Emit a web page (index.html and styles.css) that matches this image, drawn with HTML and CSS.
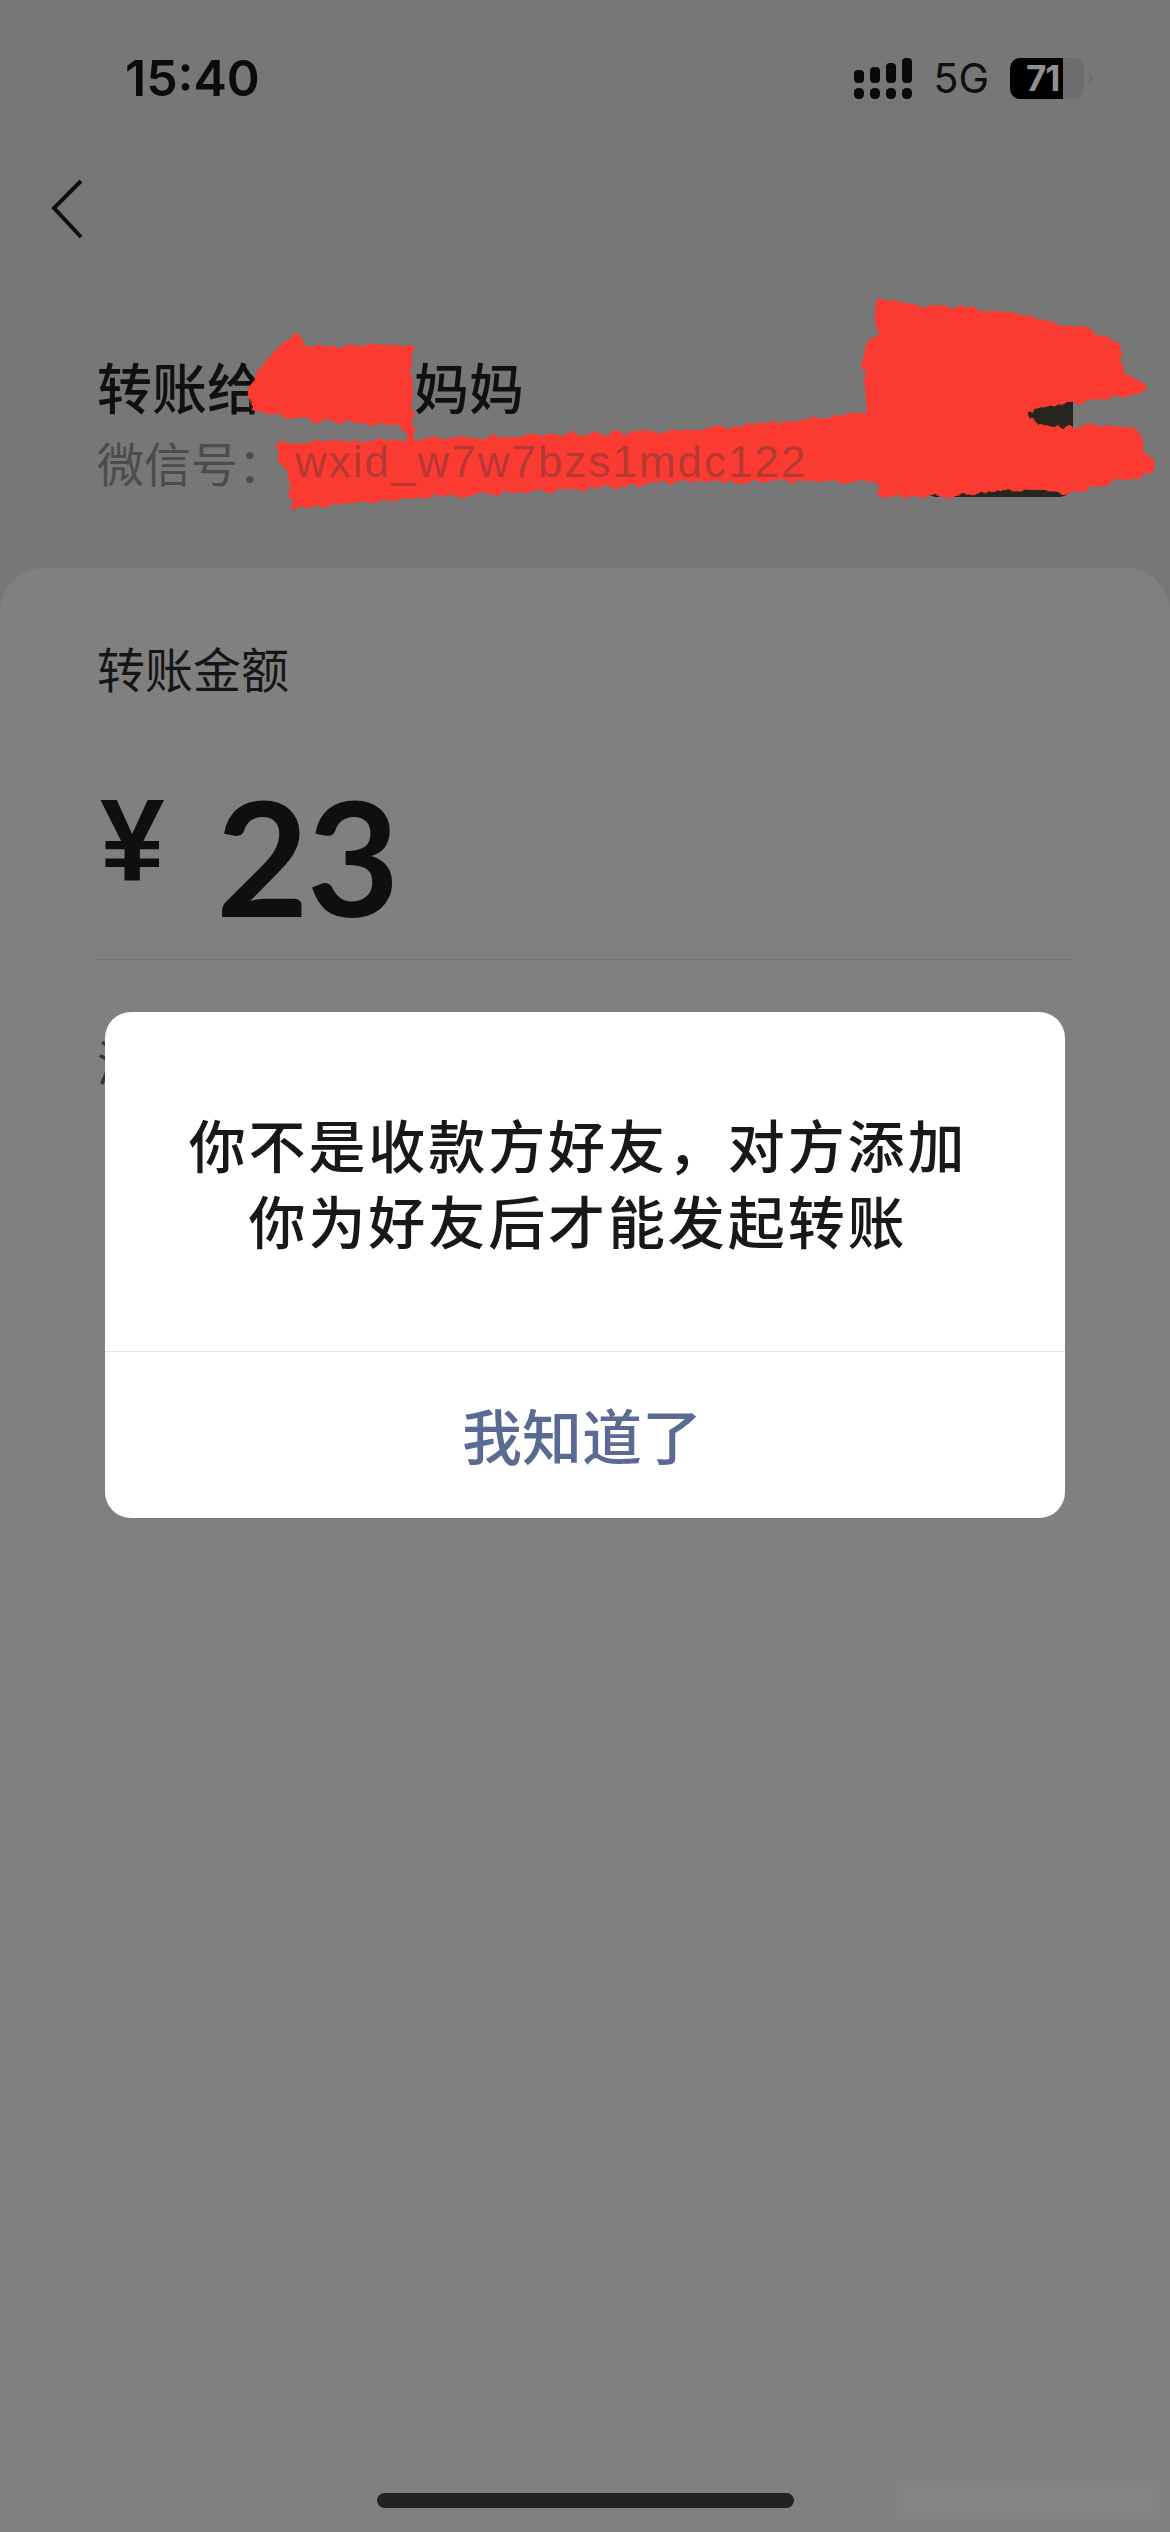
FILE: index.html
```html
<!DOCTYPE html>
<html lang="zh-CN">
<head>
<meta charset="utf-8">
<title>转账</title>
<link rel="stylesheet" href="styles.css">
</head>
<body>
<div class="screen">
  <header class="status">
    <span class="time">15:40</span>
    <div class="status-right">
      <svg class="signal" width="58" height="41" viewBox="0 0 58 41">
        <g fill="#0a0a0a">
          <rect x="0" y="12" width="10" height="13" rx="4"/>
          <rect x="16" y="9" width="10" height="16" rx="4"/>
          <rect x="32" y="5" width="10" height="20" rx="4"/>
          <rect x="48" y="0" width="10" height="25" rx="4"/>
          <rect x="0" y="30" width="10" height="11" rx="4.5"/>
          <rect x="16" y="30" width="10" height="11" rx="4.5"/>
          <rect x="32" y="30" width="10" height="11" rx="4.5"/>
          <rect x="48" y="30" width="10" height="11" rx="4.5"/>
        </g>
      </svg>
      <span class="net">5G</span>
      <div class="battery">
        <div class="battery-body">
          <div class="battery-fill"><span class="battery-num">71</span></div>
        </div>
        <div class="battery-tip"></div>
      </div>
    </div>
  </header>

  <nav class="nav">
    <svg width="34" height="60" viewBox="0 0 34 60"><path d="M31 2 L4 29 L31 58" fill="none" stroke="#0f0f0f" stroke-width="4"/></svg>
  </nav>

  <section class="payee">
    <div class="payee-name">转账给<span class="hidden-name"></span>妈妈</div>
    <div class="payee-id"><span class="id-label">微信号：</span><span class="id-value">wxid_w7w7bzs1mdc122</span></div>
    <div class="avatar"></div>
  </section>

  <main class="sheet">
    <div class="amount-label">转账金额</div>
    <div class="amount"><span class="yen">¥</span><span class="amount-num">23</span></div>
    <div class="rule"></div>
    <div class="remark">添加转账说明</div>
  </main>

  <svg class="scribble" width="1170" height="560" viewBox="0 0 1170 560">
    <defs>
      <filter id="rough" filterUnits="userSpaceOnUse" x="0" y="0" width="1170" height="560">
        <feTurbulence type="fractalNoise" baseFrequency="0.09" numOctaves="2" seed="4" result="n"/>
        <feDisplacementMap in="SourceGraphic" in2="n" scale="11" xChannelSelector="R" yChannelSelector="G"/>
      </filter>
    </defs>
    <g fill="#fb3b30" filter="url(#rough)">
      <path d="M298 332 L305 345 L412 345 L412 440 L400 425 L300 420 L252 410 L250 385 L262 365 L275 350 Z"/>
      <path d="M276 443 L700 430 L872 412 L880 482 L700 482 L420 498 L292 508 L290 482 L282 468 Z"/>
      <path d="M877 300 L1000 312 L1091 330 L1120 343 L1125 375 L1148 383 L1145 393 L1074 403 L1030 412 L1035 424 L1134 427 L1155 467 L1140 478 L1070 492 L1000 490 L935 497 L880 496 L867 413 L863 357 L866 345 L880 333 L875 325 Z"/>
    </g>
  </svg>

  <div class="scrim-dialog" role="dialog">
    <div class="dialog-body">你不是收款方好友，对方添加<br>你为好友后才能发起转账</div>
    <div class="dialog-action">我知道了</div>
  </div>

  <div class="smudge"></div>
  <div class="home-bar"></div>
</div>
</body>
</html>
```

FILE: styles.css
```css
* { box-sizing: border-box; margin: 0; padding: 0; }
html, body { width: 1170px; height: 2532px; overflow: hidden; }
body { font-family: "Noto Sans CJK SC", sans-serif; background: #777; }

.screen { position: relative; width: 1170px; height: 2532px; background: #777777; display: flex; flex-direction: column; overflow: hidden; }

.status { height: 152px; padding: 50px 77px 0 125px; display: flex; justify-content: space-between; align-items: flex-start; }
.time { font-family: Inter, sans-serif; font-size: 50px; font-weight: 600; line-height: 56px; color: #0b0b0b; }
.status-right { display: flex; align-items: center; gap: 21px; height: 56px; }
.signal { display: block; }
.net { font-family: Inter, sans-serif; font-size: 41px; color: #0f0f0f; line-height: 56px; }
.battery { display: flex; align-items: center; gap: 5px; }
.battery-body { width: 74px; height: 41px; border-radius: 10px; background: #6d6d6d; overflow: hidden; }
.battery-fill { width: 53px; height: 41px; background: #000; padding-left: 16px; }
.battery-num { font-family: Inter, sans-serif; font-weight: 700; font-size: 35px; letter-spacing: -1px; line-height: 41px; color: #909090; white-space: nowrap; display: block; }
.battery-tip { width: 0; height: 0; border-left: 4px solid #6d6d6d; border-top: 7px solid transparent; border-bottom: 7px solid transparent; }

.nav { height: 160px; padding: 27px 0 0 50px; }
.nav svg { display: block; }

.payee { height: 256px; padding: 35px 0 0 97px; position: relative; }
.payee-name { display: flex; font-size: 55px; font-weight: 500; line-height: 76px; color: #101010; }
.hidden-name { width: 152px; }
.payee-id { font-size: 47px; line-height: 64px; color: #4c4c4c; display: flex; align-items: center; margin-top: 7px; }
.id-label { width: 198px; }
.id-value { position: relative; z-index: 2; font-family: "Liberation Sans", sans-serif; font-size: 44px; letter-spacing: 2px; color: rgba(70, 50, 55, 0.4); }
.avatar { position: absolute; right: 97px; top: 35px; width: 150px; height: 150px; border-radius: 14px; background: #26261e; }

.sheet { flex: 1; background: #808080; border-radius: 44px 44px 0 0; padding: 67px 97px 0; }
.amount-label { font-size: 48px; line-height: 64px; color: #161616; }
.amount { display: flex; align-items: flex-start; height: 160px; margin-top: 76px; color: #0f0f0f; }
.yen { font-family: "Liberation Sans", sans-serif; font-weight: 700; font-size: 116px; line-height: 120px; width: 119px; padding-left: 3px; margin-top: 5px; }
.amount-num { font-family: Lato, sans-serif; font-weight: 700; font-size: 160px; line-height: 160px; letter-spacing: -2px; }
.rule { height: 1px; background: #707070; margin-top: 24px; }
.remark { font-size: 48px; line-height: 64px; margin-top: 68px; color: #33334a; }

.scribble { position: absolute; left: 0; top: 0; }

.scrim-dialog { position: absolute; left: 105px; top: 1012px; width: 960px; height: 506px; background: #fff; border-radius: 26px; display: flex; flex-direction: column; }
.dialog-body { height: 340px; padding: 93px 14px 0 0; text-align: center; font-size: 57px; font-weight: 500; line-height: 76px; letter-spacing: 2.9px; color: #181818; border-bottom: 1px solid #e6e6e6; }
.dialog-action { flex: 1; display: flex; align-items: center; justify-content: center; padding: 0 6px 4px 0; font-size: 60px; font-weight: 500; color: #5a6a92; }

.smudge { position: absolute; left: 900px; top: 2482px; width: 256px; height: 36px; background: #848484; filter: blur(5px); }
.home-bar { position: absolute; left: 377px; top: 2493px; width: 417px; height: 15px; border-radius: 8px; background: #222; }
```
